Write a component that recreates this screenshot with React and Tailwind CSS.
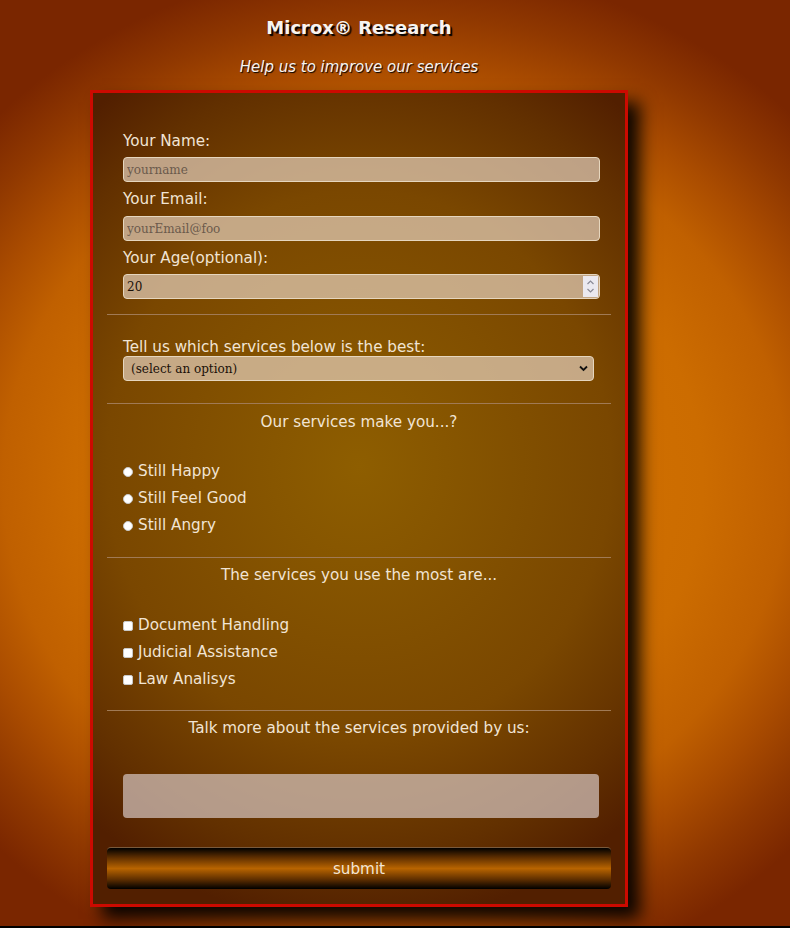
import React, { useState } from 'react';

const sans = { fontFamily: '"DejaVu Sans", Verdana, sans-serif' };
const serif = { fontFamily: '"DejaVu Serif", serif' };

const Label = ({ children, className = '' }) => (
  <div className={`pt-[1px] text-[15.2px] leading-[18px] text-[#f1e4d4] ${className}`}>{children}</div>
);

const Rule = ({ className = '' }) => <div className={`h-px bg-[#a07a55] ${className}`}></div>;

const fieldClass =
  'block h-[25px] rounded-[4px] border border-[#e6d6be] bg-[rgba(230,210,190,0.7)] px-[3px] text-[12px] text-[#1a1008] placeholder:text-[#6b5a4c] outline-none';

const App = () => {
  const [mood, setMood] = useState('');
  const [used, setUsed] = useState({});

  const toggle = (key) => setUsed({ ...used, [key]: !used[key] });

  return (
    <div className="bg-black pb-[2px]" style={sans}>
      <div className="h-[926px] overflow-hidden bg-[radial-gradient(ellipse_560px_520px_at_50%_52%,#d87800_0%,#cc6c00_55%,#c06000_70%,#aa4c00_80%,#903800_90%,#7a2600_100%)]">
        <div className="ml-[90px] w-[538px]">
          <h1 className="pt-[17px] text-center text-[18px] font-bold leading-[22px] text-[#f8f4f0] [text-shadow:2px_2px_1px_#000]">
            Microx® Research
          </h1>
          <p className="mt-[19px] text-center text-[15px] italic leading-[18px] text-[#f8f4f0] [text-shadow:1px_1px_1px_#000]">
            Help us to improve our services
          </p>

          <form
            onSubmit={(e) => e.preventDefault()}
            className="mt-[14px] border-[3px] border-[#cc0a00] bg-[radial-gradient(ellipse_420px_460px_at_50%_46%,#8e5e00_0%,#7a4700_60%,#623000_85%,#521f00_100%)] px-[14px] pt-[38px] pb-[15px] shadow-[12px_12px_16px_rgba(0,0,0,0.92)]"
          >
            <div className="pl-[16px]">
              <Label>Your Name:</Label>
              <input type="text" placeholder="yourname" className={`${fieldClass} mt-[7px] w-[477px]`} style={serif} />
              <Label className="mt-[7px]">Your Email:</Label>
              <input
                type="email"
                placeholder="yourEmail@foo"
                className={`${fieldClass} mt-[8px] w-[477px]`}
                style={serif}
              />
              <Label className="mt-[7px]">Your Age(optional):</Label>
              <div className="relative mt-[7px] w-[477px]">
                <input type="text" defaultValue="20" className={`${fieldClass} w-[477px]`} style={serif} />
                <div className="absolute right-[2px] top-[2px] flex h-[21px] w-[15px] flex-col items-center justify-center bg-[#ebe9f0]">
                  <svg width="9" height="15" viewBox="0 0 9 15" fill="none" stroke="#8a8a96" strokeWidth="1.2">
                    <path d="M1.5 5 L4.5 2 L7.5 5" />
                    <path d="M1.5 10 L4.5 13 L7.5 10" />
                  </svg>
                </div>
              </div>
            </div>

            <Rule className="mt-[15px]" />

            <div className="pl-[16px]">
              <Label className="mt-[22px]">Tell us which services below is the best:</Label>
              <div className="relative w-[471px]">
                <select
                  defaultValue=""
                  className={`${fieldClass} w-[471px] appearance-none pl-[7px] text-[11px] text-[#0c0804]`}
                  style={serif}
                >
                  <option value="">(select an option)</option>
                  <option value="document">Document Handling</option>
                  <option value="judicial">Judicial Assistance</option>
                  <option value="law">Law Analisys</option>
                </select>
                <svg
                  className="pointer-events-none absolute right-[6px] top-[9px]"
                  width="9"
                  height="7"
                  viewBox="0 0 9 7"
                  fill="none"
                  stroke="#111"
                  strokeWidth="1.8"
                >
                  <path d="M1 1.5 L4.5 5 L8 1.5" />
                </svg>
              </div>
            </div>

            <Rule className="mt-[22px]" />

            <Label className="mt-[8px] text-center">Our services make you...?</Label>
            <div className="mt-[27px] pl-[16px]">
              {['Still Happy', 'Still Feel Good', 'Still Angry'].map((m) => (
                <label key={m} className="flex h-[27px] cursor-pointer items-center" onClick={() => setMood(m)}>
                  <span className="flex h-[10px] w-[10px] items-center justify-center rounded-full border border-[#c8c8c8] bg-white">
                    {mood === m && <span className="h-[4px] w-[4px] rounded-full bg-[#333]"></span>}
                  </span>
                  <span className="ml-[5px] text-[15.2px] text-[#f1e4d4]">{m}</span>
                </label>
              ))}
            </div>

            <Rule className="mt-[18px]" />

            <Label className="mt-[7px] text-center">The services you use the most are...</Label>
            <div className="mt-[28px] pl-[16px]">
              {['Document Handling', 'Judicial Assistance', 'Law Analisys'].map((s) => (
                <label key={s} className="flex h-[27px] cursor-pointer items-center" onClick={() => toggle(s)}>
                  <span className="flex h-[10px] w-[10px] items-center justify-center rounded-[2px] border border-[#c8c8c8] bg-white text-[8px] leading-none text-[#333]">
                    {used[s] ? '✓' : ''}
                  </span>
                  <span className="ml-[5px] text-[15.2px] text-[#f1e4d4]">{s}</span>
                </label>
              ))}
            </div>

            <Rule className="mt-[17px]" />

            <Label className="mt-[7px] text-center">Talk more about the services provided by us:</Label>
            <div className="pl-[16px]">
              <textarea className="mt-[37px] block h-[44px] w-[476px] resize-none rounded-[4px] bg-[rgba(215,200,195,0.7)] p-[4px] text-[13px] outline-none"></textarea>
            </div>

            <button
              type="submit"
              className="mt-[29px] block h-[42px] w-full rounded-[4px] border-t border-[#7a5a3c] bg-[linear-gradient(to_bottom,#000_0%,#5a2c00_22%,#b86400_50%,#5a2c00_78%,#000_100%)] pt-[2px] text-[15.2px] text-[#f3e6d6]"
            >
              submit
            </button>
          </form>
        </div>
      </div>
    </div>
  );
};

export default App;
